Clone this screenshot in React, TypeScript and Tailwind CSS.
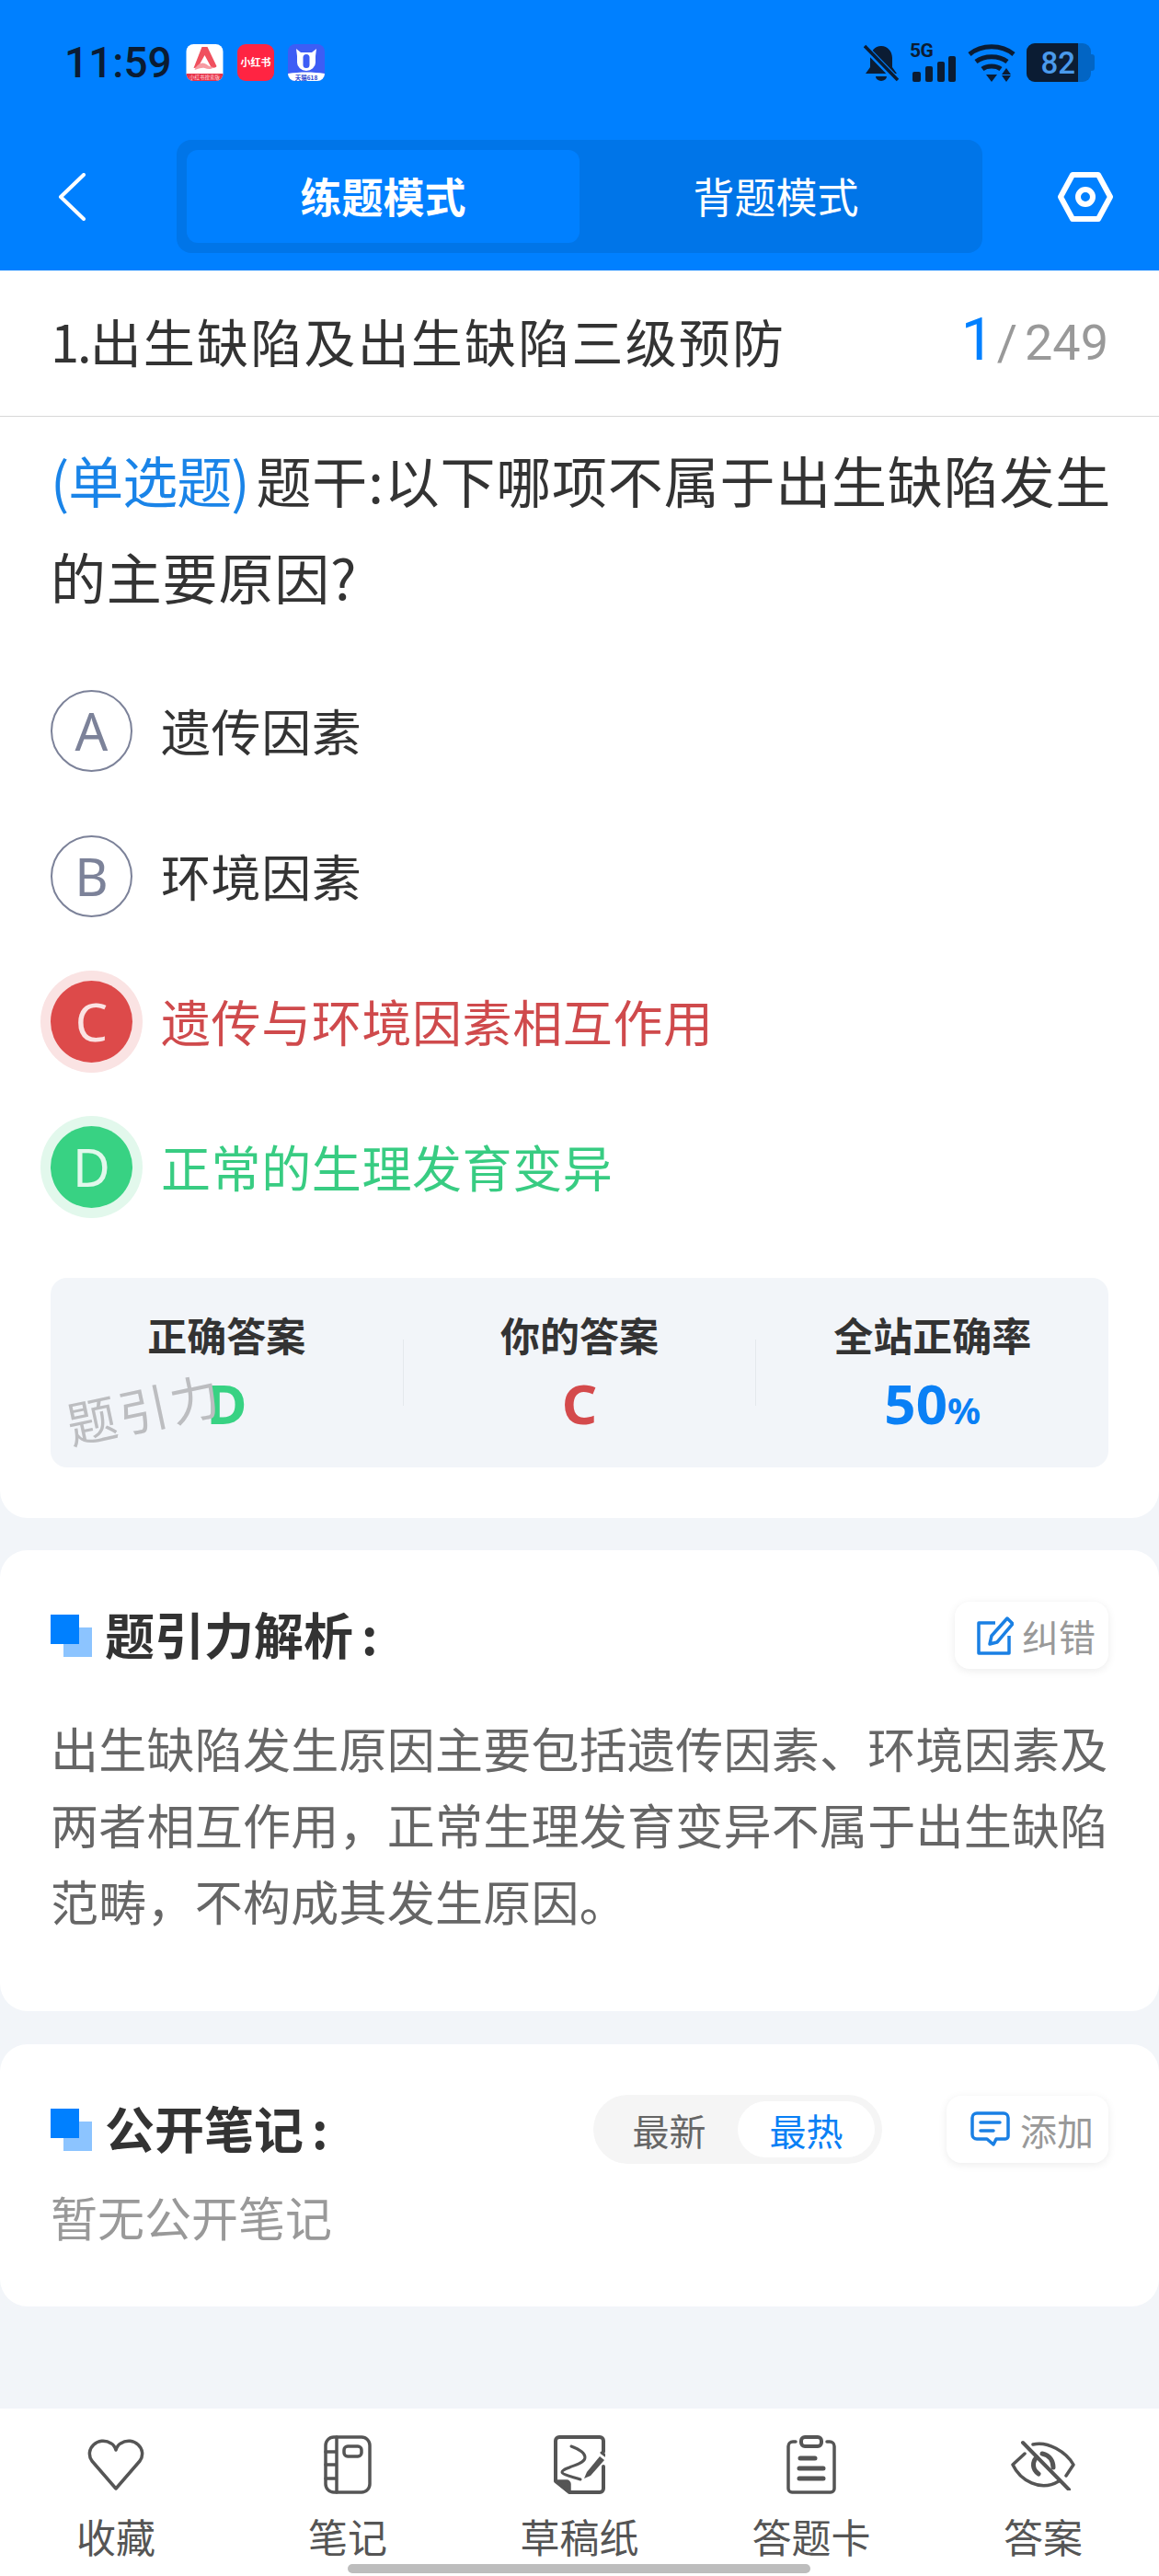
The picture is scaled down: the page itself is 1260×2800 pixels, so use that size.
const font = "font-['Noto_Sans_CJK_SC','Noto_Sans',sans-serif]";

function StatusBar() {
  return (
    <div className="h-[136px] pl-[70px] pr-[70px] pt-[47px] flex items-start justify-between">
      <div className="flex items-center h-[41px]">
        <span className="w-[132px] font-['Roboto',sans-serif] font-medium text-[46px] leading-none text-[#0b1c33]">11:59</span>
        <div className="flex items-center gap-[15px]">
          <svg width="41" height="40" viewBox="0 0 40 40">
            <rect width="40" height="40" rx="8" fill="#fff" />
            <path d="M0 32h40a8 8 0 0 1-8 8H8a8 8 0 0 1-8-8z" fill="#e8334a" />
            <path d="M17 3h6l10 21c-1 2-4 2-6 1l-7-13-5 9c-2 3-4 5-7 5z" fill="#f0505e" />
            <path d="M9 28c2-5 7-9 11-7 3 1 5 4 10 4-3 3-7 2-10 1-3-1-7 1-11 2z" fill="#f79aa2" />
            <text x="20" y="38" textAnchor="middle" fontSize="5.5" fill="#ffd9dd">小红书搜索版</text>
          </svg>
          <div className="w-[40px] h-[40px] rounded-[9px] bg-[#ff2442] flex items-center justify-center text-white text-[11px] font-bold leading-none whitespace-nowrap">小红书</div>
          <svg width="40" height="40" viewBox="0 0 40 40">
            <rect width="40" height="40" rx="8" fill="#3d5df5" />
            <path d="M0 32c13-2 27-2 40 0a8 8 0 0 1-8 8H8a8 8 0 0 1-8-8z" fill="#fff" />
            <path d="M9 5l5 4h12l5-4-1 8v7a10 9 0 0 1-20 0v-7z" fill="#fff" />
            <rect x="16.5" y="11" width="7" height="15" rx="3.5" fill="#3d5df5" />
            <text x="20" y="38.5" textAnchor="middle" fontSize="6.5" fontWeight="700" fill="#2f49d1">天猫618</text>
          </svg>
        </div>
      </div>
      <div className="flex items-center gap-[12px] h-[42px]">
        <svg width="38" height="41" viewBox="0 0 38 41" fill="#0b1c33">
          <path d="M19 2c7 0 12 6 12 13v10l5 7H2l5-7V15C7 8 12 2 19 2z" />
          <path d="M13 35h12a6 5 0 0 1-12 0z" />
          <path d="M1 3l35 36" stroke="#0080ff" strokeWidth="7" />
          <path d="M1 2l36 37" stroke="#0b1c33" strokeWidth="3.5" />
        </svg>
        <div className="relative w-[51px] h-[41px]">
          <span className="absolute left-0 top-[-3px] font-['Roboto',sans-serif] font-bold text-[21px] leading-[20px] tracking-[-0.5px] text-[#0b1c33]">5G</span>
          <svg className="absolute left-0 top-0" width="51" height="41" viewBox="0 0 51 41" fill="#0b1c33">
            <rect x="3" y="30" width="9" height="11" rx="2" />
            <rect x="17" y="24" width="8" height="17" rx="2" />
            <rect x="30" y="19" width="8" height="22" rx="2" />
            <rect x="42" y="13" width="8" height="28" rx="2" />
          </svg>
        </div>
        <svg width="52" height="41" viewBox="0 0 52 41" fill="none" stroke="#0b1c33">
          <path d="M2 11c13-11 35-11 48 0" strokeWidth="5" />
          <path d="M9 19c9-7 25-7 34 0" strokeWidth="5" />
          <path d="M16 27c5-4 15-4 20 0" strokeWidth="5" />
          <path d="M20 33h12l-6 8z" fill="#0b1c33" stroke="none" />
          <path d="M42 26l5 7H37zM42 41l5-7H37z" fill="#0b1c33" stroke="none" />
        </svg>
        <div className="flex items-center">
          <div className="flex h-[42px] w-[70px] rounded-[9px] overflow-hidden bg-[#0265c4]">
            <div className="w-[56px] bg-[#0b1c33] flex items-center justify-end pr-[3px] font-['Roboto',sans-serif] font-medium text-[33px] leading-none text-[#4a9aec]">82</div>
          </div>
          <div className="w-[4px] h-[18px] rounded-r-[3px] bg-[#0265c4]" />
        </div>
      </div>
    </div>
  );
}

function NavBar() {
  return (
    <div className="h-[158px] flex items-start">
      <div className="w-[192px] h-[123px] mt-[16px] flex items-center pl-[63px]">
        <svg width="30" height="52" viewBox="0 0 30 52" fill="none" stroke="#fff" strokeWidth="4" strokeLinecap="round" strokeLinejoin="round">
          <path d="M28 2L3 26l25 24" />
        </svg>
      </div>
      <div className="w-[876px] h-[123px] mt-[16px] rounded-[16px] bg-[#0075e8] p-[11px] flex">
        <div className="flex-1 rounded-[12px] bg-[#0080ff] flex items-center justify-center pb-[2px] text-white text-[45px] font-bold">练题模式</div>
        <div className="flex-1 flex items-center justify-center pb-[2px] text-white text-[45px]">背题模式</div>
      </div>
      <div className="flex-1 h-[123px] mt-[16px] flex items-center pl-[82px]">
        <svg width="60" height="54" viewBox="0 0 60 54" fill="none" stroke="#fff" strokeWidth="6" strokeLinejoin="round">
          <path d="M3 27L16 3h28l13 24-13 24H16z" />
          <circle cx="30" cy="27" r="8" />
        </svg>
      </div>
    </div>
  );
}

function OptionRow({ letter, text, tone }: { letter: string; text: string; tone?: "red" | "green" }) {
  const circle =
    tone === "red"
      ? "bg-[#dd4a4a] text-[#fbe3e3] shadow-[0_0_0_11px_#fae3e3]"
      : tone === "green"
        ? "bg-[#38d283] text-[#e2f8ec] shadow-[0_0_0_11px_#e2f8ec]"
        : "border-2 border-[#7c8299] text-[#7c8299]";
  const color = tone === "red" ? "text-[#cf4a4c]" : tone === "green" ? "text-[#38cc82]" : "text-[#333]";
  return (
    <div className="h-[158px] flex items-center">
      <div className={`w-[89px] h-[89px] rounded-full flex items-center justify-center text-[56px] leading-none font-['Noto_Sans',sans-serif] ${circle}`}>{letter}</div>
      <span className={`ml-[31px] text-[54px] tracking-[0.6px] leading-none ${color}`}>{text}</span>
    </div>
  );
}

function Stat({ label, children }: { label: string; children: React.ReactNode }) {
  return (
    <div className="flex-1 flex flex-col items-center">
      <div className="text-[43px] leading-[50px] font-bold text-[#333] mt-[36px]">{label}</div>
      <div className="text-[60px] leading-[70px] font-bold font-['Noto_Sans',sans-serif] mt-[15px]">{children}</div>
    </div>
  );
}

function SectionMark() {
  return (
    <svg width="45" height="46" viewBox="0 0 45 46" className="shrink-0">
      <rect x="14" y="14" width="31" height="32" fill="#8cc4ff" />
      <rect x="0" y="0" width="31" height="32" fill="#0080ff" />
    </svg>
  );
}

function SmallButton({ icon, text, size }: { icon: React.ReactNode; text: string; size: string }) {
  return (
    <div className={`h-[73px] rounded-[16px] bg-white shadow-[0_2px_10px_rgba(0,0,0,0.08)] flex items-center gap-[9px] text-[40px] leading-none text-[#999] ${size}`}>
      {icon}
      {text}
    </div>
  );
}

const navStroke = { fill: "none", stroke: "#555", strokeWidth: 3.5, strokeLinecap: "round", strokeLinejoin: "round" } as const;

function BottomItem({ label, children }: { label: string; children: React.ReactNode }) {
  return (
    <div className="w-[252px] flex flex-col items-center">
      <div className="h-[64px] flex items-center justify-center">{children}</div>
      <div className="mt-[23px] text-[43px] leading-[44px] text-[#555]">{label}</div>
    </div>
  );
}

function BottomBar() {
  return (
    <div className="relative mt-auto h-[182px] bg-white flex pt-[29px]">
      <BottomItem label="收藏">
        <svg width="64" height="56" viewBox="0 0 64 56" {...navStroke}>
          <path d="M32 54L6 24C-3 11 13-4 27 5c2 1 4 4 5 7 1-3 3-6 5-7 14-9 30 6 21 19z" />
        </svg>
      </BottomItem>
      <BottomItem label="笔记">
        <svg width="52" height="64" viewBox="0 0 52 64" {...navStroke}>
          <rect x="2" y="2" width="48" height="60" rx="9" />
          <path d="M14 2v60M2 18h12M2 32h12M2 47h12" />
          <rect x="22" y="12" width="19" height="11" rx="4" />
        </svg>
      </BottomItem>
      <BottomItem label="草稿纸">
        <svg width="56" height="64" viewBox="0 0 56 64" {...navStroke}>
          <path d="M54 34v24a4 4 0 0 1-4 4H17L2 50V6a4 4 0 0 1 4-4h44a4 4 0 0 1 4 4v12" strokeWidth="4" />
          <path d="M3 50h11a3 3 0 0 1 3 3v9z" fill="#555" />
          <path d="M19 12c8 3 15 7 15 12 0 6-10 8-17 11-5 2-8 3-8 5 0 3 11 5 20 8" strokeWidth="3" />
          <path d="M36 40l14-17 5 4-15 17-7 3z" fill="#555" stroke="none" />
          <path d="M52 19l4 3" strokeWidth="3" />
        </svg>
      </BottomItem>
      <BottomItem label="答题卡">
        <svg width="56" height="64" viewBox="0 0 56 64" {...navStroke}>
          <path d="M11 7H8a5 5 0 0 0-5 5v46a4 4 0 0 0 4 4h42a4 4 0 0 0 4-4V12a5 5 0 0 0-5-5h-3" />
          <rect x="17" y="2" width="22" height="10" rx="4" strokeWidth="4" />
          <path d="M16 25h16M15 36h26M15 47h26" strokeWidth="5" />
        </svg>
      </BottomItem>
      <BottomItem label="答案">
        <svg width="70" height="56" viewBox="0 0 70 56" {...navStroke}>
          <path d="M13 4l50 51" strokeWidth="4" />
          <path d="M15 16L2 28c8 17 30 30 50 18M24 6c16-4 36 8 44 22L60 40" />
          <path d="M28 20c-5 5-5 13 2 18M34 16c9 2 12 9 12 15" strokeWidth="5" />
        </svg>
      </BottomItem>
      <div className="absolute left-[378px] bottom-[3px] w-[503px] h-[10px] rounded-full bg-[#bdbdbd]" />
    </div>
  );
}

export default function App() {
  return (
    <div className={`w-[1260px] h-[2800px] flex flex-col bg-[#f2f5f9] ${font}`}>
      <div className="bg-[#0080ff] h-[294px] shrink-0">
        <StatusBar />
        <NavBar />
      </div>

      {/* Question card */}
      <div className="bg-white rounded-b-[30px] h-[1356px] shrink-0">
        <div className="h-[159px] border-b border-[#d8d8d8] pl-[55px] pr-[55px] pb-[7px] flex items-center justify-between">
          <div className="text-[56px] tracking-[2.2px] leading-none text-[#333]">
            <span className="tracking-[-2px]">1.</span>出生缺陷及出生缺陷三级预防
          </div>
          <div className="flex items-baseline font-['Roboto',sans-serif] text-[#999] text-[54px] leading-none">
            <span className="text-[#0080ff] text-[64px] mr-[3px]">1</span>
            <span className="mr-[8px]">/</span>
            249
          </div>
        </div>
        <div className="pl-[55px] pr-[50px]">
          <div className="text-[60px] tracking-[0.8px] leading-[105px] text-[#333] pt-[15px]">
            <span className="text-[#1a84e8] tracking-[-1px] mr-[8px]">(单选题)</span>题干:以下哪项不属于出生缺陷发生的主要原因?
          </div>
          <div className="mt-[37px]">
            <OptionRow letter="A" text="遗传因素" />
            <OptionRow letter="B" text="环境因素" />
            <OptionRow letter="C" text="遗传与环境因素相互作用" tone="red" />
            <OptionRow letter="D" text="正常的生理发育变异" tone="green" />
          </div>
          <div className="relative mt-[42px] mr-[5px] h-[206px] rounded-[18px] bg-[#f2f5f9] flex items-stretch">
            <Stat label="正确答案"><span className="text-[#38d283]">D</span></Stat>
            <div className="w-px h-[72px] mt-[67px] bg-[#e4e8ec]" />
            <Stat label="你的答案"><span className="text-[#d44a4c]">C</span></Stat>
            <div className="w-px h-[72px] mt-[67px] bg-[#e4e8ec]" />
            <Stat label="全站正确率"><span className="text-[#0a80f5]">50<span className="text-[40px]">%</span></span></Stat>
            <div className="absolute left-[16px] top-[114px] -rotate-[12deg] text-[54px] leading-none tracking-[3px] text-[#bcbdc0]">题引力</div>
          </div>
        </div>
      </div>

      {/* Analysis */}
      <div className="mt-[35px] bg-white rounded-[30px] h-[501px] shrink-0 pl-[55px] pr-[55px] pt-[56px]">
        <div className="flex items-center justify-between">
          <div className="flex items-center gap-[14px]">
            <SectionMark />
            <span className="text-[54px] leading-[70px] pb-[3px] font-bold text-[#333]">题引力解析<span className="ml-[9px]">:</span></span>
          </div>
          <SmallButton
            text="纠错"
            size="w-[167px] pl-[24px]"
            icon={
              <svg width="40" height="42" viewBox="0 0 40 42" fill="none" stroke="#1a80e4" strokeWidth="3.5" strokeLinejoin="round">
                <path d="M20 7H2v33h33V21" />
                <path d="M33 2l6 6-17 20-8 2 2-9z" />
              </svg>
            }
          />
        </div>
        <div className="mt-[44px] -mr-[5px] text-[52px] tracking-[0.25px] leading-[83px] text-[#666]">
          {"出生缺陷发生原因主要包括遗传因素、环境因素及两者相互作用\uFF0C正常生理发育变异不属于出生缺陷范畴\uFF0C不构成其发生原因。"}
        </div>
      </div>

      {/* Public notes */}
      <div className="mt-[36px] bg-white rounded-[30px] h-[285px] shrink-0 pl-[55px] pr-[55px] pt-[55px]">
        <div className="flex items-center">
          <SectionMark />
          <span className="ml-[14px] text-[54px] leading-[70px] pb-[3px] font-bold text-[#333]">公开笔记<span className="ml-[9px]">:</span></span>
          <div className="ml-auto h-[75px] w-[314px] rounded-full bg-[#f5f5f5] pl-[8px] pr-[8px] py-[7px] flex text-[40px] leading-none">
            <div className="w-[149px] flex items-center justify-center text-[#666]">最新</div>
            <div className="w-[149px] rounded-full bg-white flex items-center justify-center text-[#0a80f5]">最热</div>
          </div>
          <div className="ml-[70px]">
            <SmallButton
              text="添加"
              size="w-[176px] pl-[26px]"
              icon={
                <svg className="mr-[2px]" width="43" height="39" viewBox="0 0 43 39" fill="none" stroke="#1a80e4" strokeWidth="3.5" strokeLinejoin="round" strokeLinecap="round">
                  <path d="M7 2h29a5 5 0 0 1 5 5v20a3 3 0 0 1-3 3H28l-3 6-7-6H7a5 5 0 0 1-5-5V7a5 5 0 0 1 5-5z" />
                  <path d="M11 12h21M11 21h14" />
                </svg>
              }
            />
          </div>
        </div>
        <div className="mt-[21px] text-[51px] leading-[72px] text-[#999]">暂无公开笔记</div>
      </div>

      <BottomBar />
    </div>
  );
}
